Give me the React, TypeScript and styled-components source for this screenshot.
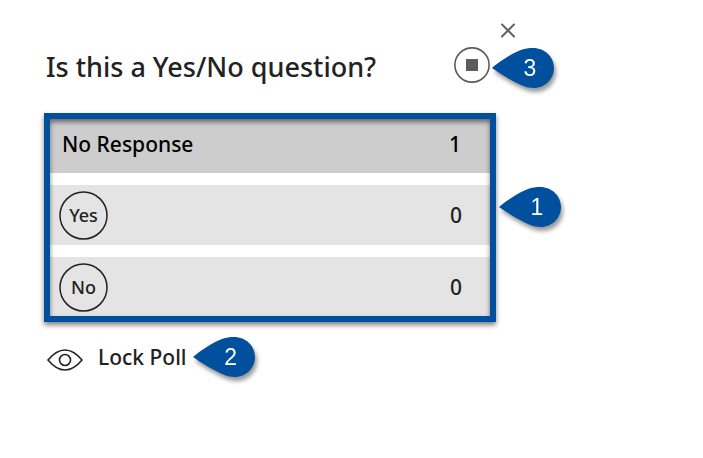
import React from "react";
import styled, { createGlobalStyle } from "styled-components";

const GlobalStyle = createGlobalStyle`
  * { box-sizing: border-box; }
  body {
    margin: 0;
    background: #fff;
    color: #222;
    font-family: "Noto Sans", "Open Sans", sans-serif;
    font-weight: 500;
  }
  button { font: inherit; color: inherit; background: none; border: 0; padding: 0; cursor: pointer; }
`;

const Page = styled.main`
  padding: 22px 187px 24px 44px;
`;

const TopBar = styled.div`
  display: flex;
  justify-content: flex-end;
`;

const CloseButton = styled.button`
  display: flex;
  width: 16px;
  height: 16px;
`;

const Poll = styled.section`
  margin-right: 20px;
`;

const Header = styled.header`
  display: flex;
  align-items: flex-start;
  justify-content: space-between;
  padding: 9px 6px 26px 2px;
`;

const Title = styled.h1`
  margin: 0;
  font-size: 27px;
  line-height: 40px;
  font-weight: 500;
`;

const Anchor = styled.div`
  position: relative;
  display: flex;
`;

const StopButton = styled.button`
  display: flex;
  width: 36px;
  height: 36px;
`;

const Results = styled.div`
  position: relative;
`;

const Frame = styled.div`
  position: relative;
  border: 6px solid #00509e;
  box-shadow: 0 3px 5px rgba(0, 0, 0, 0.5);

  &::after {
    content: "";
    position: absolute;
    inset: 0;
    box-shadow: inset 0 3px 5px rgba(0, 0, 0, 0.5);
    pointer-events: none;
  }
`;

const Rows = styled.ul`
  display: flex;
  flex-direction: column;
  gap: 12px;
  margin: 0;
  padding: 0;
  list-style: none;
`;

const Row = styled.li<{ $summary?: boolean }>`
  display: flex;
  align-items: center;
  justify-content: space-between;
  height: ${(p) => (p.$summary ? 54 : 60)}px;
  padding: ${(p) => (p.$summary ? "0 29px 4px 12px" : "0 28px 0 9px")};
  background: ${(p) => (p.$summary ? "#cdcdcd" : "#e4e4e4")};
  color: ${(p) => (p.$summary ? "#000" : "#222")};
  font-size: 21px;
  line-height: 28px;

  &:last-child { height: 59px; padding-top: 1px; }
`;

const Choice = styled.span`
  position: relative;
  display: flex;
  align-items: center;
  justify-content: center;
  width: 49px;
  height: 49px;
  font-size: 18px;

  svg { position: absolute; inset: 0; }
`;

const Footer = styled.footer`
  display: flex;
  padding: 20px 0 0 3px;
`;

const LockButton = styled.button`
  display: flex;
  align-items: center;
  gap: 15px;
  font-size: 21px;
  line-height: 30px;

  svg { margin-top: 6px; }
`;

const Marker = styled.span<{ $top: number; $gap: number }>`
  position: absolute;
  left: 100%;
  top: ${(p) => p.$top}px;
  margin-left: ${(p) => p.$gap}px;
  width: 62px;
  height: 40px;
  filter: drop-shadow(2px 4px 2px rgba(0, 0, 0, 0.4));

  svg { display: block; }
`;

const MarkerLabel = styled.span`
  position: absolute;
  top: 0;
  right: 4px;
  width: 40px;
  color: #fff;
  font-family: "Liberation Sans", Arial, sans-serif;
  font-size: 23px;
  font-weight: 400;
  line-height: 40px;
  text-align: center;
`;

function Callout({ label, top, gap }: { label: string; top: number; gap: number }) {
  return (
    <Marker $top={top} $gap={gap}>
      <svg width="62" height="40" viewBox="0 0 62 40" aria-hidden="true">
        <path
          d="M0 20C7 14 20 5 29 2C33 .6 37 0 41 0C53 0 62 9 62 20C62 31 53 40 42 40C37 40 33 39 29 37C20 33 7 25 0 20Z"
          fill="#00509e"
        />
      </svg>
      <MarkerLabel>{label}</MarkerLabel>
    </Marker>
  );
}

const choices = [
  { label: "Yes", count: 0 },
  { label: "No", count: 0 },
];

export default function App() {
  return (
    <>
      <GlobalStyle />
      <Page>
        <TopBar>
          <CloseButton type="button" aria-label="Close">
            <svg width="16" height="16" viewBox="0 0 16 16" stroke="#626262" strokeWidth="2" strokeLinecap="round">
              <path d="M2 2.5L14 14.5M14 2.5L2 14.5" />
            </svg>
          </CloseButton>
        </TopBar>
        <Poll>
          <Header>
            <Title>Is this a Yes/No question?</Title>
            <Anchor>
              <StopButton type="button" aria-label="Stop poll">
                <svg width="36" height="36" viewBox="0 0 36 36">
                  <circle cx="18" cy="18" r="17.1" fill="none" stroke="#5c5c5c" strokeWidth="1.6" />
                  <rect x="12" y="12" width="12" height="12" fill="#5c5c5c" />
                </svg>
              </StopButton>
              <Callout label="3" top={1} gap={2} />
            </Anchor>
          </Header>
          <Results>
            <Frame>
              <Rows>
                <Row $summary>
                  <span>No Response</span>
                  <span>1</span>
                </Row>
                {choices.map((c) => (
                  <Row key={c.label}>
                    <Choice>
                      <svg width="49" height="49" viewBox="0 0 49 49" aria-hidden="true">
                        <circle cx="24.5" cy="24.5" r="23.5" fill="none" stroke="#222" strokeWidth="1.5" />
                      </svg>
                      {c.label}
                    </Choice>
                    <span>{c.count}</span>
                  </Row>
                ))}
              </Rows>
            </Frame>
            <Callout label="1" top={74} gap={3} />
          </Results>
          <Footer>
            <Anchor>
              <LockButton type="button">
                <svg width="36" height="22" viewBox="0 0 36 22" fill="none" stroke="#222" strokeWidth="1.6">
                  <path d="M1 11C6 5 11 1 18 1S30 5 35 11C30 17 25 21 18 21S6 17 1 11Z" strokeLinejoin="round" />
                  <circle cx="18" cy="11" r="5.5" />
                </svg>
                Lock Poll
              </LockButton>
              <Callout label="2" top={-5} gap={6} />
            </Anchor>
          </Footer>
        </Poll>
      </Page>
    </>
  );
}
